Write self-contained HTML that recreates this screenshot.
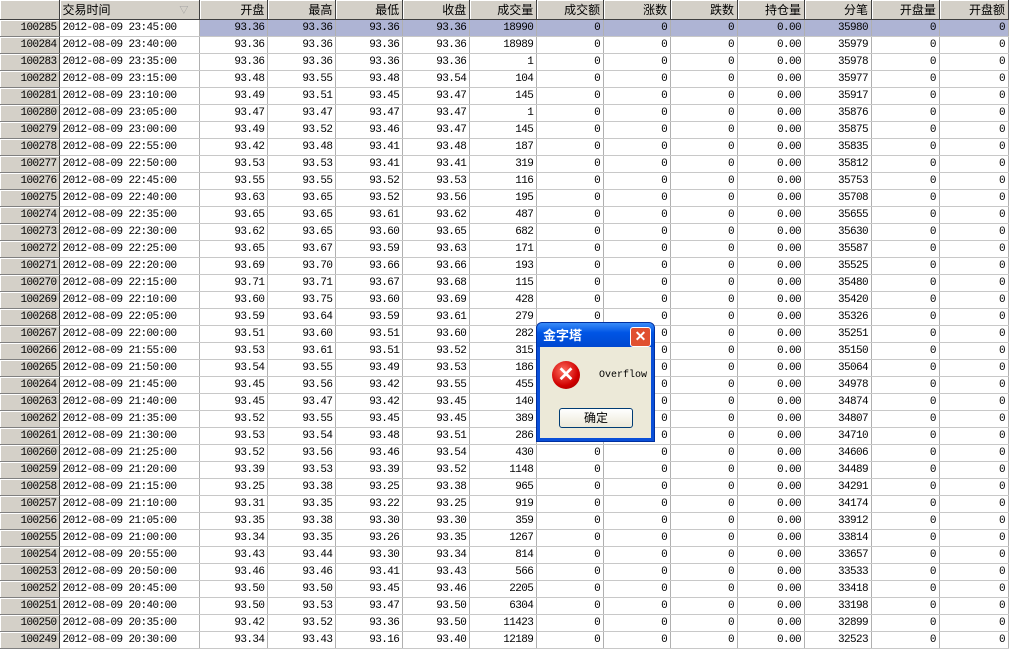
<!DOCTYPE html>
<html><head><meta charset="utf-8"><style>
body{margin:0;width:1009px;height:651px;overflow:hidden;background:#fff;font-family:"Liberation Mono","Noto Sans CJK SC",monospace;font-size:11px;letter-spacing:-0.6px;position:relative}
table{border-collapse:collapse;table-layout:fixed;position:absolute;left:0;top:0}
td,th{height:16px;padding:0 3px 0 0;border-right:1px solid #b0b0b0;border-bottom:1px solid #c8c8c8;text-align:right;white-space:nowrap;overflow:hidden;line-height:16px}
th{height:19px;background:#d4d0c8;font-weight:normal;letter-spacing:0;font-family:"Liberation Sans","Noto Sans CJK SC",sans-serif;font-size:12px;border-right:1px solid #404040;border-bottom:1px solid #404040;box-shadow:inset 1px 1px 0 #fff}
td.h{background:#d4d0c8;border-right:1px solid #404040;border-bottom:1px solid #808080;box-shadow:inset 1px 1px 0 #fff}
td.t{text-align:left;padding-left:2px}
tr.s td{background:#aeb4d4}
tr.s td.t{background:#fff}
tr.s td.h{background:#d4d0c8}
.dlg{position:absolute;left:536px;top:322px;width:117px;height:118px;background:#0a4fd8;border-radius:6px 6px 0 0;border:1px solid #0030a0;letter-spacing:0}
.tb{height:24px;background:linear-gradient(#3a8cf8,#0055e5 40%,#0048d0);border-radius:5px 5px 0 0;color:#fff;font-family:"Noto Sans CJK SC",sans-serif;font-weight:bold;font-size:13px;line-height:24px;padding-left:6px}
.x{position:absolute;right:3px;top:4px;width:19px;height:18px;background:#e05030;border:1px solid #fff;border-radius:3px;color:#fff;font:bold 14px/17px "Liberation Sans",sans-serif;text-align:center}
.bd{position:absolute;left:3px;top:24px;right:3px;bottom:3px;background:#ece9d8}
.ic{position:absolute;left:12px;top:14px;width:28px;height:28px;border-radius:50%;background:radial-gradient(circle at 40% 35%,#ff7060,#d00000 60%,#900000);color:#fff;font:bold 20px/28px "Liberation Sans",sans-serif;text-align:center}
.ov{position:absolute;left:59px;top:23px;font-size:10px;font-family:"Liberation Mono",monospace}
.bt{position:absolute;left:19px;top:61px;width:72px;height:18px;border:1px solid #003c74;border-radius:3px;background:linear-gradient(#fff,#ece9d8);font:12px/18px "Noto Sans CJK SC",sans-serif;text-align:center}
</style></head><body>
<table>
<colgroup><col style="width:60px"><col style="width:140px"><col style="width:68px"><col style="width:68px"><col style="width:67px"><col style="width:67px"><col style="width:67px"><col style="width:67px"><col style="width:67px"><col style="width:67px"><col style="width:67px"><col style="width:67px"><col style="width:68px"><col style="width:69px"></colgroup>
<tr><th></th><th style="text-align:left;padding-left:2px">交易时间<span style="float:right;color:#999;font-size:9px;margin-right:8px">▽</span></th><th>开盘</th><th>最高</th><th>最低</th><th>收盘</th><th>成交量</th><th>成交额</th><th>涨数</th><th>跌数</th><th>持仓量</th><th>分笔</th><th>开盘量</th><th>开盘额</th></tr>
<tbody id="b"></tbody>
</table>
<script>
var d=`100285 23:45 93.36 93.36 93.36 93.36 18990 35980
100284 23:40 93.36 93.36 93.36 93.36 18989 35979
100283 23:35 93.36 93.36 93.36 93.36 1 35978
100282 23:15 93.48 93.55 93.48 93.54 104 35977
100281 23:10 93.49 93.51 93.45 93.47 145 35917
100280 23:05 93.47 93.47 93.47 93.47 1 35876
100279 23:00 93.49 93.52 93.46 93.47 145 35875
100278 22:55 93.42 93.48 93.41 93.48 187 35835
100277 22:50 93.53 93.53 93.41 93.41 319 35812
100276 22:45 93.55 93.55 93.52 93.53 116 35753
100275 22:40 93.63 93.65 93.52 93.56 195 35708
100274 22:35 93.65 93.65 93.61 93.62 487 35655
100273 22:30 93.62 93.65 93.60 93.65 682 35630
100272 22:25 93.65 93.67 93.59 93.63 171 35587
100271 22:20 93.69 93.70 93.66 93.66 193 35525
100270 22:15 93.71 93.71 93.67 93.68 115 35480
100269 22:10 93.60 93.75 93.60 93.69 428 35420
100268 22:05 93.59 93.64 93.59 93.61 279 35326
100267 22:00 93.51 93.60 93.51 93.60 282 35251
100266 21:55 93.53 93.61 93.51 93.52 315 35150
100265 21:50 93.54 93.55 93.49 93.53 186 35064
100264 21:45 93.45 93.56 93.42 93.55 455 34978
100263 21:40 93.45 93.47 93.42 93.45 140 34874
100262 21:35 93.52 93.55 93.45 93.45 389 34807
100261 21:30 93.53 93.54 93.48 93.51 286 34710
100260 21:25 93.52 93.56 93.46 93.54 430 34606
100259 21:20 93.39 93.53 93.39 93.52 1148 34489
100258 21:15 93.25 93.38 93.25 93.38 965 34291
100257 21:10 93.31 93.35 93.22 93.25 919 34174
100256 21:05 93.35 93.38 93.30 93.30 359 33912
100255 21:00 93.34 93.35 93.26 93.35 1267 33814
100254 20:55 93.43 93.44 93.30 93.34 814 33657
100253 20:50 93.46 93.46 93.41 93.43 566 33533
100252 20:45 93.50 93.50 93.45 93.46 2205 33418
100251 20:40 93.50 93.53 93.47 93.50 6304 33198
100250 20:35 93.42 93.52 93.36 93.50 11423 32899
100249 20:30 93.34 93.43 93.16 93.40 12189 32523`.split("\n");
var h="";d.forEach(function(l,i){var a=l.split(" ");h+='<tr'+(i==0?' class="s"':'')+'><td class="h">'+a[0]+'</td><td class="t">2012-08-09 '+a[1]+':00</td><td>'+a[2]+'</td><td>'+a[3]+'</td><td>'+a[4]+'</td><td>'+a[5]+'</td><td>'+a[6]+'</td><td>0</td><td>0</td><td>0</td><td>0.00</td><td>'+a[7]+'</td><td>0</td><td>0</td></tr>';});
document.getElementById("b").innerHTML=h;
</script>
<div class="dlg"><div class="tb">金字塔</div><div class="x">✕</div>
<div class="bd"><div class="ic">✕</div><div class="ov">Overflow</div><div class="bt">确定</div></div></div>
</body></html>
